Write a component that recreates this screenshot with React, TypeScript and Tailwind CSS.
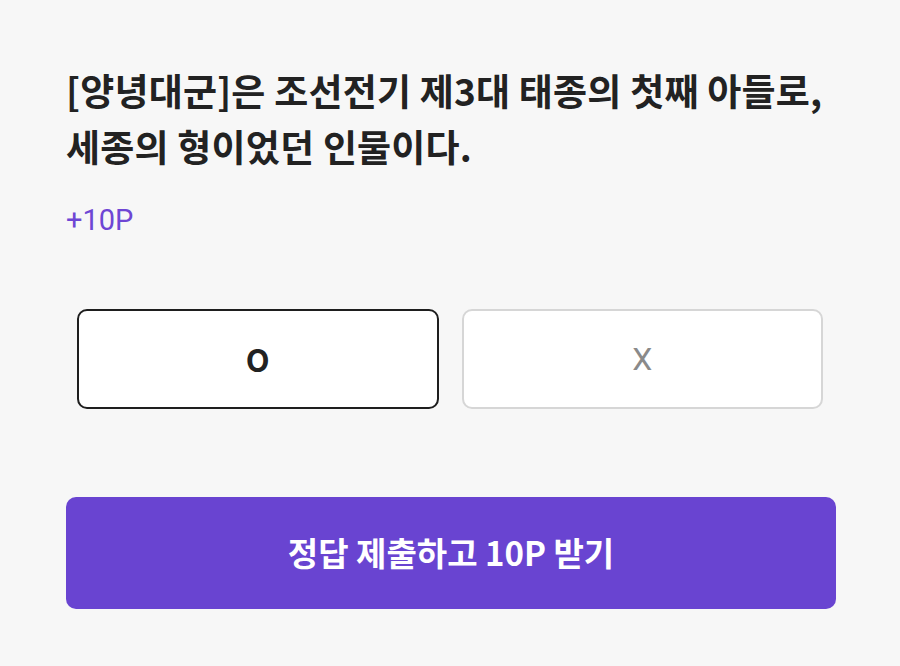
import React from "react";

export default function App() {
  const font = { fontFamily: '"Noto Sans CJK KR", "Noto Sans", sans-serif' };
  return (
    <div
      className="w-[900px] h-[666px] bg-[#f7f7f7] text-[#222222] px-[66px] pt-[62px]"
      style={font}
    >
      <p className="text-[37px] leading-[56px] font-bold tracking-[0.2px]">
        [양녕대군]은 조선전기 제3대 태종의 첫째 아들로,
        <br />
        세종의 형이었던 인물이다.
      </p>
      <p className="mt-[28px] text-[29px] leading-[36px] text-[#6e46d4] font-['Roboto',sans-serif]">
        +10P
      </p>
      <div className="mt-[71px] px-[11px] grid grid-cols-2 gap-[23px]">
        <button className="h-[100px] rounded-[10px] border-2 border-[#1e1e1e] bg-white text-[31px] font-bold text-[#222222]">
          O
        </button>
        <button className="h-[100px] rounded-[10px] border-2 border-[#d6d6d6] bg-white text-[32px] text-[#8a8a8a] font-['Roboto',sans-serif]">
          X
        </button>
      </div>
      <button className="mt-[88px] w-[770px] h-[112px] rounded-[10px] bg-[#6944d1] text-white text-[33px] font-bold">
        정답 제출하고 10P 받기
      </button>
    </div>
  );
}
